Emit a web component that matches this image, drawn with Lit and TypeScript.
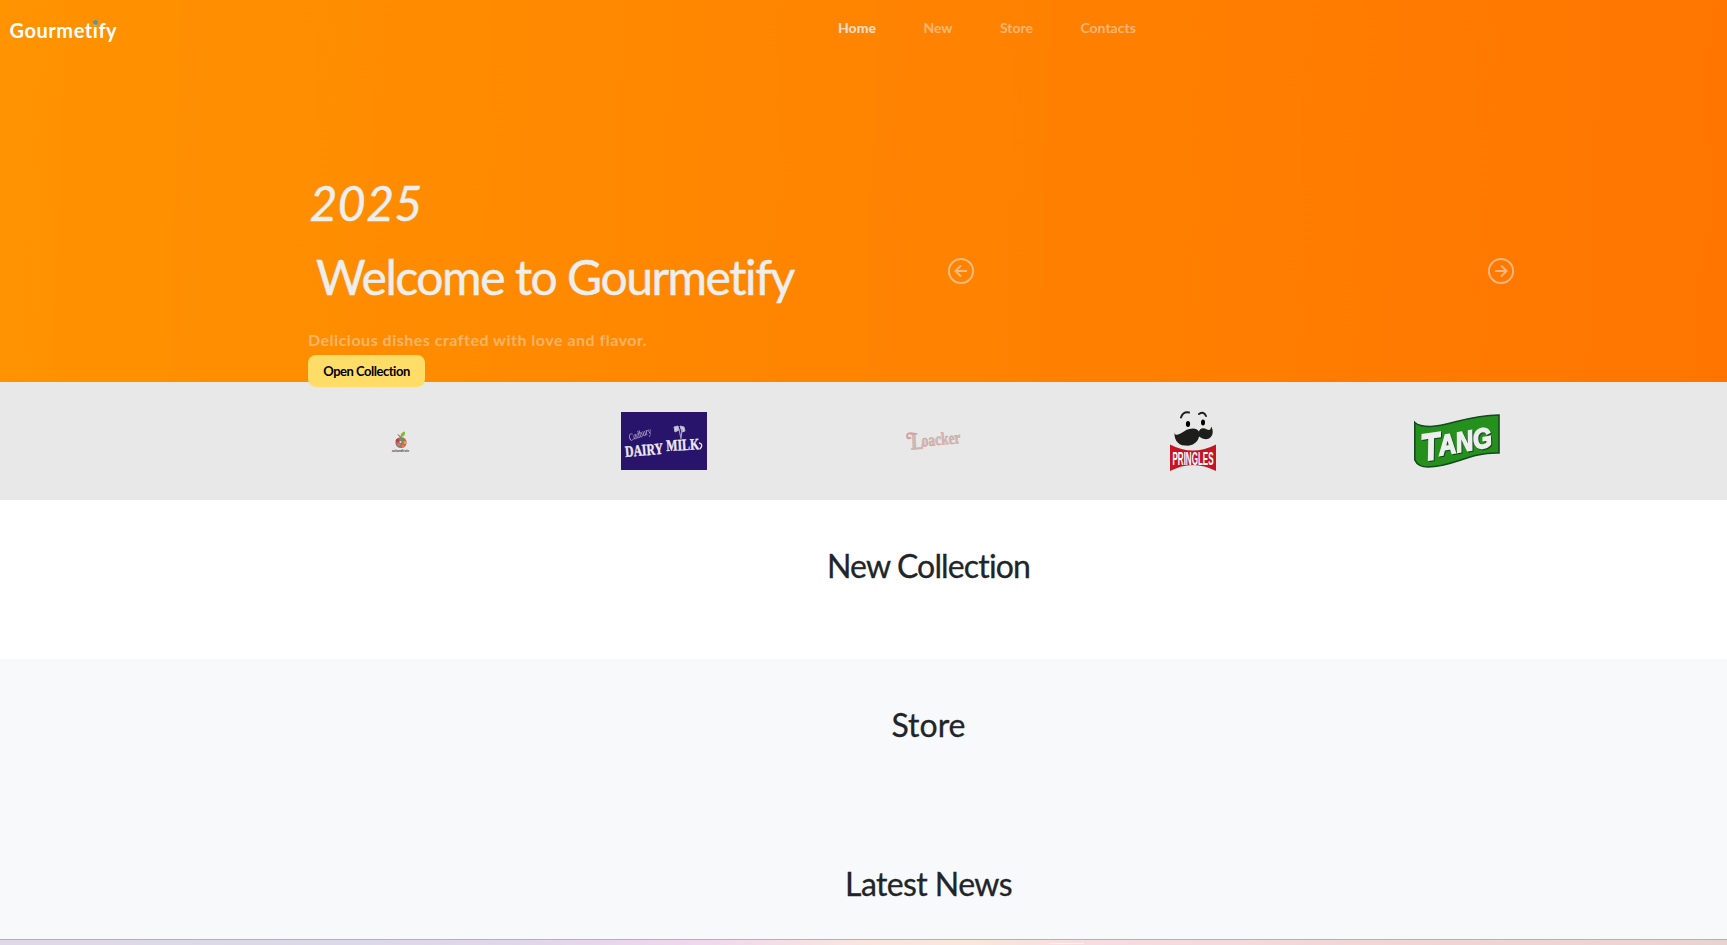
import { LitElement, html, css, svg } from "lit";
import { customElement } from "lit/decorators.js";

const NAV = ["Home", "New", "Store", "Contacts"];

const arrow = (flip: boolean) => svg`
  <circle cx="14" cy="14" r="12.1"></circle>
  <path d="${flip ? "M8 14h11.5M14 8.5l5.5 5.5L14 19.5" : "M20 14H8.5M14 8.5L8.5 14l5.5 5.5"}"></path>`;

@customElement("brand-strip")
class BrandStrip extends LitElement {
  static styles = css`
    :host { display: flex; height: 118px; background: #e8e8e8; padding: 0 138.500px 0 269px; align-items: center; }
    .cell { flex: 1; display: flex; justify-content: center; }
    svg { display: block; overflow: visible; }
    .loacker { padding-left: 2px; }
    .shadowed { filter: drop-shadow(1px 1px 0 #0e4b1b); }
  `;
  render() {
    return html`
      <div class="cell">
        <svg width="86" height="60" viewBox="0 0 86 60">
          <circle cx="43" cy="31.5" r="5.6" fill="#ba6558"></circle>
          <path d="M42.5 26q0-5 4.5-5.500q.5 5-4 5.500z" fill="#86b82e"></path>
          <path d="M42.500 26l-2.500-2.500" stroke="#554433" stroke-width="1"></path>
          <circle cx="39.5" cy="29.5" r="1.8" fill="#cf3455"></circle>
          <circle cx="44" cy="28.5" r="1.7" fill="#5a9b79"></circle>
          <circle cx="47" cy="31.5" r="1.6" fill="#eba53d"></circle>
          <circle cx="41" cy="33.5" r="1.6" fill="#61a9a5"></circle>
          <circle cx="45" cy="35" r="1.5" fill="#e2843c"></circle>
          <circle cx="42.5" cy="31" r="1" fill="#f0e0c0"></circle>
          <text x="34" y="41" font-family="Lato, sans-serif" font-size="4" font-weight="900" fill="#444" textLength="17" lengthAdjust="spacingAndGlyphs">culturedfruits</text>
        </svg>
      </div>
      <div class="cell">
        <svg width="86" height="58" viewBox="0 0 86 58">
          <rect width="86" height="58" fill="#29146b"></rect>
          <g fill="#eeeaf4" font-family="Liberation Serif, serif" font-weight="700">
            <text transform="translate(9 29) rotate(-19)" font-size="10" font-style="italic" font-weight="400" textLength="23" lengthAdjust="spacingAndGlyphs" opacity=".8">Cadbury</text>
            <g stroke="#eeeaf4" stroke-width=".35">
              <text transform="translate(4.5 45) rotate(-5)" font-size="16" textLength="38" lengthAdjust="spacingAndGlyphs">DAIRY</text>
              <text transform="translate(45.5 39) rotate(-3)" font-size="16" textLength="33" lengthAdjust="spacingAndGlyphs">MILK</text>
            </g>
          </g>
          <path d="M78 31q5 1 1 6" fill="none" stroke="#eeeaf4" stroke-width="1.300"></path>
          <path d="M53 15l4-1 1 4-4 2zM59 14l4 1 1 4-3 1z" fill="#cfc8dd" stroke="#bcb4ce"></path>
          <path d="M58 17l2 10M61 17l-1 10" stroke="#a59bbb" stroke-width="1.200"></path>
        </svg>
      </div>
      <div class="cell loacker">
        <svg width="80" height="60" viewBox="0 0 80 60">
          <g font-family="Liberation Serif, serif" font-weight="700" fill="#c6bdb8" stroke="#dc9c96" stroke-width=".5">
            <text transform="translate(21 38.500) rotate(-3)" font-size="24" textLength="13" lengthAdjust="spacingAndGlyphs">L</text>
            <text transform="translate(32 35.500) rotate(-5)" font-size="17.500" textLength="39" lengthAdjust="spacingAndGlyphs">oacker</text>
          </g>
          <path d="M25 23q-7-2-8 1.500q0 4 4 2" fill="none" stroke="#d0a29d" stroke-width="2"></path>
        </svg>
      </div>
      <div class="cell">
        <svg width="48" height="62" viewBox="0 0 48 62">
          <g fill="none" stroke="#1d1d1b" stroke-width="2" stroke-linecap="round">
            <path d="M12 7.500q2-6 8-5"></path><path d="M30 4q5-3 7 2"></path>
          </g>
          <ellipse cx="19" cy="14" rx="2.1" ry="3"></ellipse><ellipse cx="34" cy="12.500" rx="2" ry="3"></ellipse>
          <path fill="#1d1d1b" d="M6 20.500c-1 3 0 5 3 4 6-2 8-6 15-6q4 0 6 3c1-4 5-4 8-2 3 1 4 0 4-3 3 4 2 10-2 12q-5 2-10-2c-1 6-7 10-14 9C8 35.500 4 27.500 6 20.500z"></path>
          <path d="M1 34.500q23 12 46 0v26.500q-23-12-46 0z" fill="#c51524"></path>
          <text x="3.5" y="55" textLength="41" lengthAdjust="spacingAndGlyphs" font-family="Liberation Sans, sans-serif" font-weight="700" font-size="19" fill="#fff">PRINGLES</text>
        </svg>
      </div>
      <div class="cell">
        <svg width="86" height="54" viewBox="0 0 86 54">
          <path d="M.8 8.5q4 4 16 4C35 12 55 1 85 1v38C55 38 40 53 14 53Q4 53 .8 46z" fill="#25901c" stroke="#124923" stroke-width="1.6"></path>
          <g class="shadowed" font-family="Liberation Sans, sans-serif" font-weight="700" font-style="italic" fill="#eee" stroke="#eee" stroke-width="1.6">
            <text transform="translate(9 47) rotate(-8)" font-size="38" textLength="19" lengthAdjust="spacingAndGlyphs">T</text>
            <text transform="translate(26 41.500) rotate(-10)" font-size="28" textLength="54" lengthAdjust="spacingAndGlyphs">ANG</text>
          </g>
        </svg>
      </div>`;
  }
}

@customElement("app-root")
class AppRoot extends LitElement {
  static styles = css`
    :host { display: block; height: 945px; overflow: hidden; background: #f8f9fb; color: #212529; font-family: Lato, sans-serif; }
    .hero { height: 382px; background: linear-gradient(92deg, #ff9300, #ff7500); }
    header { display: flex; height: 56px; color: #fff; }
    .logo { width: 828px; padding: 18px 0 0 9.500px; box-sizing: border-box; font: 700 20px/25px Lato, sans-serif; letter-spacing: .55px; }
    .dot { position: relative; }
    .dot::after { content: ""; position: absolute; left: 0; top: 2px; width: 5px; height: 5px; border-radius: 50%; background: #5c95a0; }
    nav { display: flex; padding: 18px 0 0 10px; font: 700 14px/20px Lato, sans-serif; gap: 47.400px; color: rgba(236,236,236,.5); }
    .active { color: rgba(236,236,236,.85); font-weight: 900; }
    .row { display: flex; padding: 118px 212px 0 308px; justify-content: space-between; }
    .year, .title { font-size: 48px; line-height: 58px; color: #eee; -webkit-text-stroke: .5px #eee; }
    .year { font-style: italic; padding-left: 1.500px; letter-spacing: .5px; }
    .title { padding: 15.500px 0 0 8px; letter-spacing: -1.45px; white-space: nowrap; }
    .lead { font: 700 16px/20px Lato, sans-serif; color: rgba(236,236,236,.45); padding-top: 24.500px; letter-spacing: .5px; }
    .btn { display: block; margin-top: 5px; width: 117px; height: 32px; border: 0; border-radius: 8px; background: #ffdd67; color: #000; font: 700 13px/20px Lato, sans-serif; padding: 0 0 1px; letter-spacing: -.48px; white-space: nowrap; position: relative; }
    .arrows { display: flex; width: 568px; justify-content: space-between; padding-top: 83px; height: 28px; }
    .arrows svg { fill: none; stroke: rgba(238,238,238,.53); stroke-width: 2; }
    section { height: 159px; box-sizing: border-box; padding: 46px 0 0 130px; text-align: center; }
    .white { background: #fff; }
    h2 { margin: 0; font: 400 32px/40px Lato, sans-serif; -webkit-text-stroke: .3px; }
    .white h2 { letter-spacing: -.85px; }
    .news { height: 121px; }
    .news h2 { letter-spacing: -.6px; }
    footer { height: 5px; border-top: 1px solid #b3b1b4; background: linear-gradient(90deg, #dfd8e8, #dcd8e9 20%, #e0d6ea 30%, #efd7ee 40%, #f9e5df 50%, #fae6dc 56%, #f5dce0 64%, #efd6d4 82%, #e9d3d1); }
    .chip { width: 35px; height: 1px; margin-left: 1049px; border-top: 3px solid transparent; background: #f8f1f3; background-clip: padding-box; }
  `;
  render() {
    return html`
      <div class="hero">
        <header>
          <div class="logo">Gourmet<span class="dot">i</span>fy</div>
          <nav>${NAV.map((n, i) => html`<span class="${i ? "" : "active"}">${n}</span>`)}</nav>
        </header>
        <div class="row">
          <div>
            <div class="year">2025</div>
            <div class="title">Welcome to Gourmetify</div>
            <div class="lead">Delicious dishes crafted with love and flavor.</div>
            <button class="btn">Open Collection</button>
          </div>
          <div class="arrows">
            <svg width="28" height="28">${arrow(false)}</svg>
            <svg width="28" height="28">${arrow(true)}</svg>
          </div>
        </div>
      </div>
      <brand-strip></brand-strip>
      <section class="white"><h2>New Collection</h2></section>
      <section><h2>Store</h2></section>
      <section class="news"><h2>Latest News</h2></section>
      <footer><div class="chip"></div></footer>`;
  }
}
